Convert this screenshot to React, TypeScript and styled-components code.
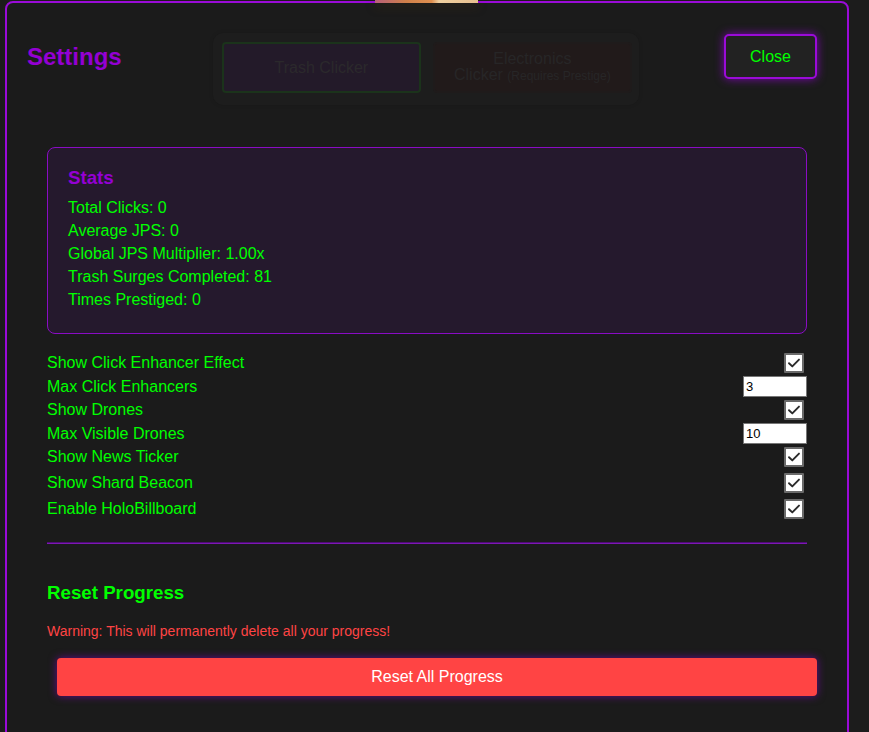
import React from "react";
import styled, { createGlobalStyle } from "styled-components";

const Global = createGlobalStyle`
  html, body {
    margin: 0;
    padding: 0;
    background: #1c1c1c;
    overflow: hidden;
    font-family: "Liberation Sans", Arial, sans-serif;
  }
  * { box-sizing: border-box; }
`;

const Page = styled.div`
  position: relative;
  width: 869px;
  height: 732px;
  padding: 1px 0 0 5px;
`;

const TopGlow = styled.div`
  position: absolute;
  top: 0;
  left: 375px;
  width: 103px;
  height: 3px;
  background: linear-gradient(90deg, #b8607a 0%, #d0804a 30%, #e09050 55%, #f0d0a0 62%, #e8c090 100%);
  box-shadow: 0 4px 8px rgba(70, 50, 20, 0.55);
  z-index: 2;
`;

const Modal = styled.div`
  width: 844px;
  height: 780px;
  background: #1b1b1b;
  border: 2px solid #9a0bd8;
  border-radius: 8px;
  padding: 20px;
`;

const Header = styled.div`
  display: flex;
  justify-content: space-between;
  align-items: flex-start;
`;

const Title = styled.h2`
  margin: 20px 0 0;
  font-size: 24px;
  font-weight: bold;
  color: #9400d3;
`;

const TabGroup = styled.div`
  display: flex;
  gap: 12px;
  margin: 10px 0 0 6px;
  padding: 9px 7px 12px 9px;
  background: #1d1d1d;
  border-radius: 10px;
  box-shadow: 0 0 4px rgba(0, 0, 0, 0.12);
`;

const Tab = styled.div<{ $active?: boolean }>`
  width: 199px;
  height: 51px;
  display: flex;
  flex-direction: column;
  align-items: center;
  justify-content: center;
  text-align: center;
  border-radius: 4px;
  font-size: 16px;
  line-height: 16px;
  color: ${(p) => (p.$active ? "#2b292c" : "#272627")};
  background: ${(p) => (p.$active ? "#231a29" : "#211a1a")};
  border: 2px solid ${(p) => (p.$active ? "#1b331b" : "#1f1b1b")};
`;

const Small = styled.span`
  font-size: 12px;
`;

const CloseButton = styled.button`
  margin: 11px 10px 0 0;
  width: 93px;
  height: 45px;
  background: #222222;
  color: #00ff00;
  font-family: "Liberation Sans", Arial, sans-serif;
  font-size: 16px;
  border: 2px solid #9a0bd8;
  border-radius: 5px;
  box-shadow: 0 0 10px rgba(148, 0, 211, 0.8);
  cursor: pointer;
`;

const Content = styled.div`
  margin-top: 42px;
  padding: 0 20px;
`;

const StatsBox = styled.div`
  background: #25192d;
  border: 1px solid #8a0cc4;
  border-radius: 8px;
  padding: 19px 20px 22px;
`;

const StatsTitle = styled.h3`
  margin: 0 0 8px;
  font-size: 18.72px;
  line-height: 21px;
  font-weight: bold;
  color: #9400d3;
`;

const StatLine = styled.div`
  font-size: 16px;
  line-height: 23px;
  color: #00ff00;
`;

const Rows = styled.div`
  margin-top: 16px;
  display: flex;
  flex-direction: column;
`;

const Row = styled.div`
  display: flex;
  justify-content: space-between;
  align-items: center;
`;

const Label = styled.span`
  font-size: 16px;
  color: #00ff00;
`;

const CheckBox = styled.span`
  display: inline-flex;
  align-items: center;
  justify-content: center;
  width: 20px;
  height: 20px;
  margin: 3px 3px 3px 4px;
  background: #ffffff;
  border: 2px solid #6a6a6a;
  border-radius: 1px;
`;

const NumberInput = styled.input`
  width: 64px;
  height: 21px;
  padding: 1px 2px;
  border: 1px solid #767676;
  background: #ffffff;
  color: #000;
  font-family: "Liberation Sans", Arial, sans-serif;
  font-size: 13px;
  outline: none;
`;

const Divider = styled.div`
  margin-top: 20px;
  height: 2px;
  background: linear-gradient(#4e0c74 0 50%, #7c18b4 50% 100%);
`;

const ResetTitle = styled.h3`
  margin: 38px 0 0;
  font-size: 18.72px;
  line-height: 21px;
  font-weight: bold;
  color: #00ff00;
`;

const Warning = styled.p`
  margin: 20px 0 0;
  font-size: 14px;
  line-height: 16px;
  color: #ff4444;
`;

const ResetButton = styled.button`
  display: block;
  margin: 19px 0 0 10px;
  width: 100%;
  height: 38px;
  background: #ff4444;
  color: #ffffff;
  font-family: "Liberation Sans", Arial, sans-serif;
  font-size: 16px;
  border: none;
  border-radius: 4px;
  box-shadow: 0 0 8px rgba(148, 0, 211, 0.6);
  cursor: pointer;
`;

const Check = () => (
  <CheckBox role="checkbox" aria-checked="true">
    <svg width="14" height="14" viewBox="0 0 14 14">
      <path d="M2 7.2 L5.3 10.4 L12 3.6" fill="none" stroke="#2a2a2a" strokeWidth="1.9" strokeLinecap="round" strokeLinejoin="round" />
    </svg>
  </CheckBox>
);

type Setting = { label: string; kind: "check" | "number"; value?: string };

const settings: Setting[] = [
  { label: "Show Click Enhancer Effect", kind: "check" },
  { label: "Max Click Enhancers", kind: "number", value: "3" },
  { label: "Show Drones", kind: "check" },
  { label: "Max Visible Drones", kind: "number", value: "10" },
  { label: "Show News Ticker", kind: "check" },
  { label: "Show Shard Beacon", kind: "check" },
  { label: "Enable HoloBillboard", kind: "check" },
];

const stats = [
  "Total Clicks: 0",
  "Average JPS: 0",
  "Global JPS Multiplier: 1.00x",
  "Trash Surges Completed: 81",
  "Times Prestiged: 0",
];

export default function App() {
  return (
    <Page>
      <Global />
      <TopGlow />
      <Modal>
        <Header>
          <Title>Settings</Title>
          <TabGroup>
            <Tab $active>Trash Clicker</Tab>
            <Tab>
              <span>Electronics</span>
              <span>
                Clicker <Small>(Requires Prestige)</Small>
              </span>
            </Tab>
          </TabGroup>
          <CloseButton>Close</CloseButton>
        </Header>
        <Content>
          <StatsBox>
            <StatsTitle>Stats</StatsTitle>
            {stats.map((s) => (
              <StatLine key={s}>{s}</StatLine>
            ))}
          </StatsBox>
          <Rows>
            {settings.map((s) => (
              <Row key={s.label}>
                <Label>{s.label}</Label>
                {s.kind === "check" ? <Check /> : <NumberInput defaultValue={s.value} />}
              </Row>
            ))}
          </Rows>
          <Divider />
          <ResetTitle>Reset Progress</ResetTitle>
          <Warning>Warning: This will permanently delete all your progress!</Warning>
          <ResetButton>Reset All Progress</ResetButton>
        </Content>
      </Modal>
    </Page>
  );
}
